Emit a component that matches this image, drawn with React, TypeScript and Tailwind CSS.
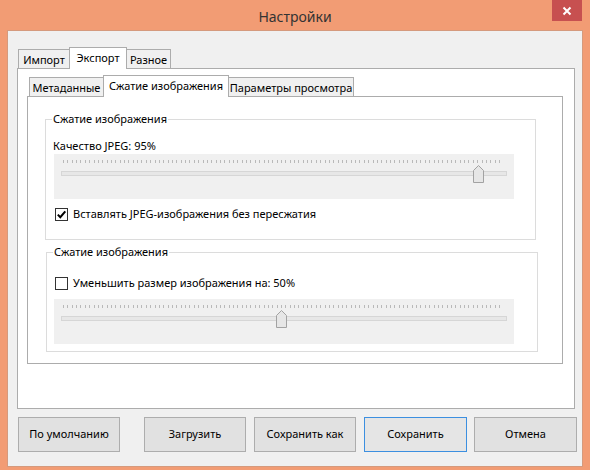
import React from "react";

const FONT = { fontFamily: '"Noto Sans", "Open Sans", Arial, sans-serif' };

function Tab({ label, w, selected }: { label: string; w: number; selected?: boolean }) {
  if (selected) {
    return (
      <div
        className="relative z-20 -ml-px flex h-[22px] items-start justify-center whitespace-nowrap border border-b-0 border-[#acacac] bg-white pt-[2px] text-[11px] leading-[15px] text-black"
        style={{ width: w }}
      >
        {label}
      </div>
    );
  }
  return (
    <div
      className="-ml-px flex h-[20px] items-start justify-center whitespace-nowrap border border-[#acacac] bg-[#f0f0f0] pt-[2px] text-[11px] leading-[15px] text-black first:ml-0"
      style={{ width: w }}
    >
      {label}
    </div>
  );
}

function Slider({ value }: { value: number }) {
  const center = 8.6 + value * 4.378;
  return (
    <div className="relative ml-[8px] h-[45px] w-[460px] bg-[#f0f0f0]">
      <div className="ml-[9px] flex w-[438px] justify-between pt-[6px]">
        {Array.from({ length: 101 }).map((_, i) => (
          <span key={i} className="block h-[3px] w-px bg-[#b9b9b9]" />
        ))}
      </div>
      <div className="ml-[7px] mt-[8px] h-[5px] w-[446px] border border-[#d6d6d6] bg-[#e7e7e7]" />
      <svg
        className="absolute top-[11px]"
        style={{ left: Math.round(center - 5.5) }}
        width="11"
        height="18"
        viewBox="0 0 11 18"
      >
        <polygon points="0.5,5.5 5.5,0.5 10.5,5.5 10.5,17.5 0.5,17.5" fill="#e6e6e6" stroke="#a2a2a2" strokeWidth="1" />
      </svg>
    </div>
  );
}

function Checkbox({ checked }: { checked?: boolean }) {
  return (
    <div className="flex h-[13px] w-[13px] shrink-0 items-center justify-center border border-[#333333] bg-white">
      {checked && (
        <svg width="11" height="11" viewBox="0 0 11 11">
          <path d="M1.8 5.6 L4.3 8.2 L9.3 2.3" fill="none" stroke="#000" strokeWidth="2" />
        </svg>
      )}
    </div>
  );
}

function Button({ label, def, w = 102 }: { label: string; def?: boolean; w?: number }) {
  return (
    <div
      className={`flex h-[35px] items-center justify-center whitespace-nowrap border text-[11px] text-black ${
        def ? "border-[#3c8fe0] bg-[#e5e5e5]" : "border-[#adadad] bg-[#e1e1e1]"
      }`}
      style={{ width: w }}
    >
      {label}
    </div>
  );
}

function GroupLabel({ children }: { children: React.ReactNode }) {
  return (
    <div className="-mt-[9px] ml-[6px] block w-fit whitespace-nowrap bg-white px-px text-[11px] leading-[16px] text-black">
      {children}
    </div>
  );
}

export default function App() {
  return (
    <div className="relative h-[470px] w-[590px] overflow-hidden bg-[#f29c74]" style={FONT}>
      <div className="flex h-[30px] items-center justify-center pt-[2px] text-[14px] text-[#333333]">Настройки</div>
      <div className="absolute left-[552px] top-0 flex h-[21px] w-[30px] items-center justify-center bg-[#c75050]">
        <svg width="10" height="10" viewBox="0 0 10 10">
          <path d="M1.5 1.5 L8.5 8.5 M8.5 1.5 L1.5 8.5" stroke="#fff" strokeWidth="2" />
        </svg>
      </div>

      <div className="ml-[7px] h-[437px] w-[576px] border border-[#d59a7d] bg-[#f0f0f0]">
        <div className="pt-[16px]">
          <div className="ml-[9px] w-[558px]">
            <div className="relative z-10 -mb-px flex items-end pl-px">
              <Tab label="Импорт" w={52} />
              <Tab label="Экспорт" w={58} selected />
              <Tab label="Разное" w={45} />
            </div>
            <div className="h-[341px] border border-[#acacac] bg-white pl-[9px] pt-[6px]">
              <div className="relative z-10 -mb-px flex items-end pl-[2px]">
                <Tab label="Метаданные" w={75} />
                <Tab label="Сжатие изображения" w={126} selected />
                <Tab label="Параметры просмотра" w={126} />
              </div>
              <div className="h-[268px] w-[536px] border border-[#acacac] bg-white pt-[22px]">
                {/* Group 1 */}
                <div className="ml-[17px] h-[121px] w-[491px] border border-[#dcdcdc]">
                  <GroupLabel>Сжатие изображения</GroupLabel>
                  <div className="pl-[7px] pt-[11px] text-[11px] leading-[16px] text-black">Качество JPEG: 95%</div>
                  <Slider value={95} />
                  <div className="ml-[9px] mt-[7px] flex items-center gap-[5px] text-[11px] leading-[16px] text-black">
                    <Checkbox checked />
                    <span className="whitespace-nowrap">Вставлять JPEG-изображения без пересжатия</span>
                  </div>
                </div>
                {/* Group 2 */}
                <div className="ml-[18px] mt-[12px] h-[100px] w-[492px] border border-[#dcdcdc]">
                  <GroupLabel>Сжатие изображения</GroupLabel>
                  <div className="ml-[8px] mt-[15px] flex items-center gap-[5px] text-[11px] leading-[16px] text-black">
                    <Checkbox />
                    <span className="whitespace-nowrap">Уменьшить размер изображения на: 50%</span>
                  </div>
                  <div className="-ml-px pt-[8px]">
                    <Slider value={50} />
                  </div>
                </div>
              </div>
            </div>
          </div>
        </div>
        <div className="ml-[10px] mt-[8px] flex">
          <Button label="По умолчанию" />
          <div className="w-[24px]" />
          <Button label="Загрузить" />
          <div className="w-[8px]" />
          <Button label="Сохранить как" />
          <div className="w-[8px]" />
          <Button label="Сохранить" def w={103} />
          <div className="w-[7px]" />
          <Button label="Отмена" w={103} />
        </div>
      </div>
    </div>
  );
}
